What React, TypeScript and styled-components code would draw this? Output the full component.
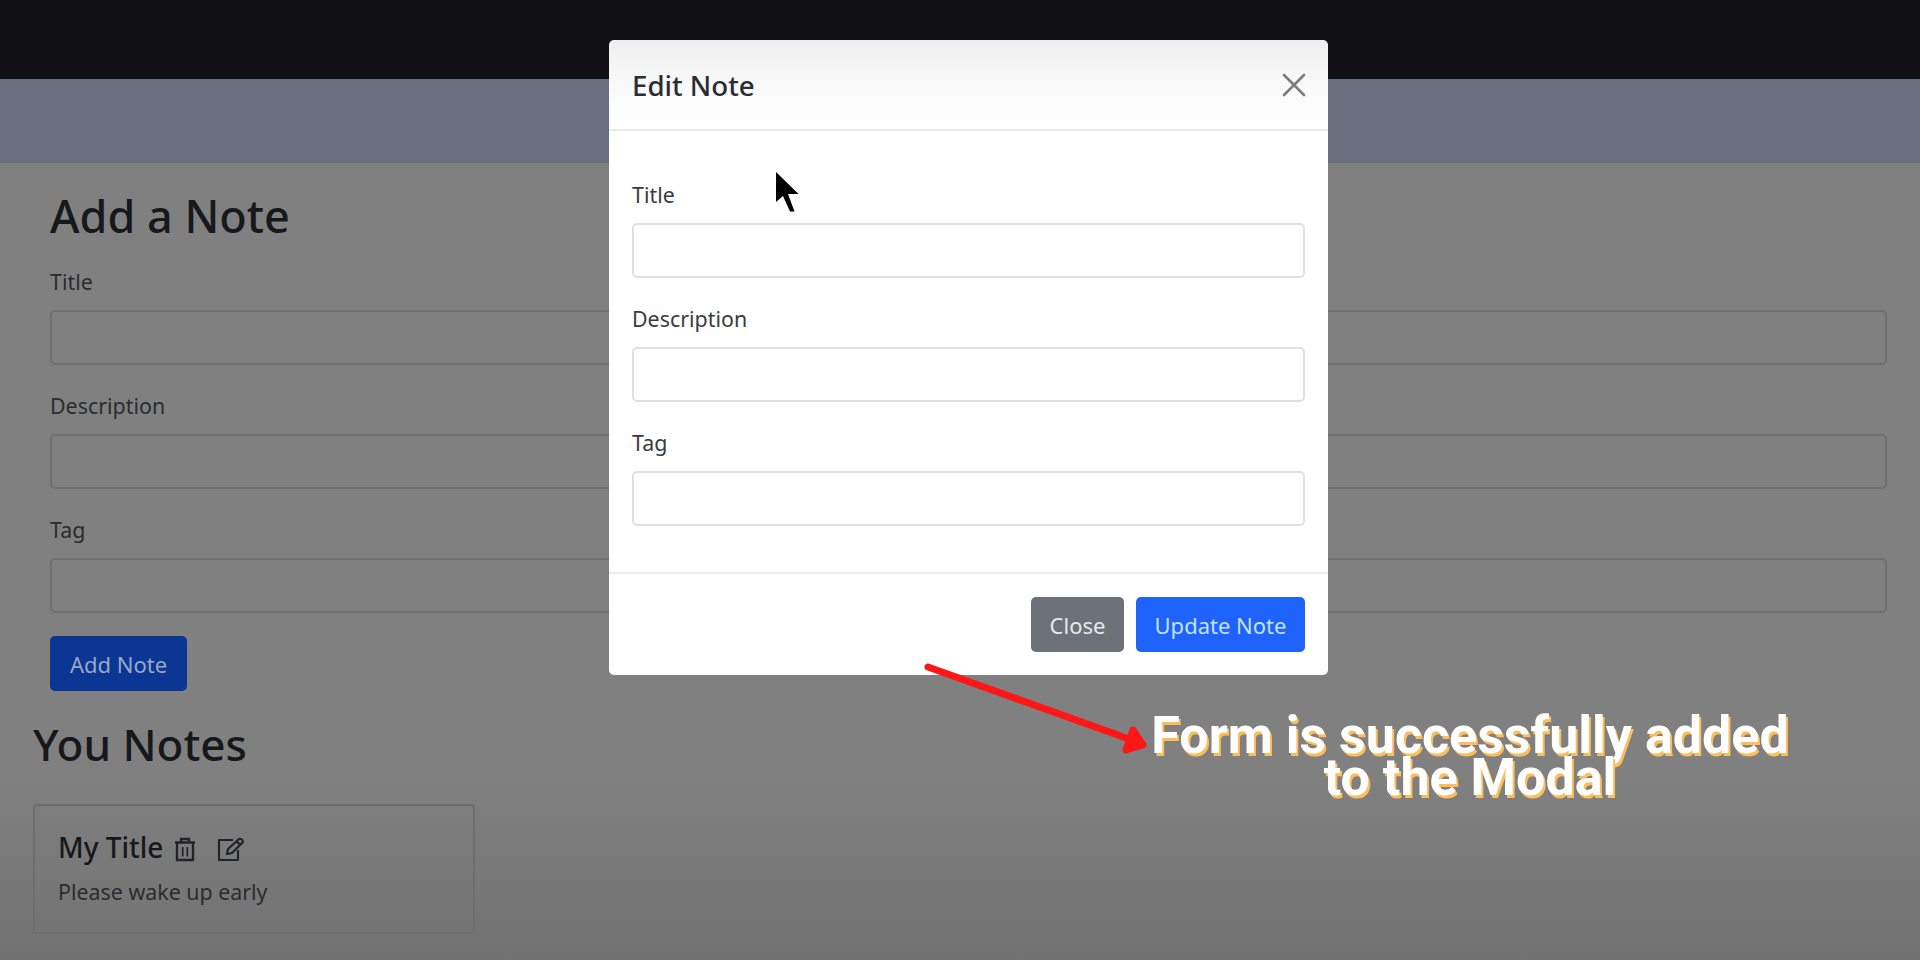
import React from "react";
import styled, { createGlobalStyle } from "styled-components";

const GlobalStyle = createGlobalStyle`
  * { box-sizing: border-box; }
  body { margin: 0; background: #fff; overflow: hidden; }
  h2, h5, p { margin: 0; }
`;

const Page = styled.div`
  position: relative;
  width: 1920px;
  height: 960px;
  overflow: hidden;
  background: linear-gradient(#808080 0, #808080 780px, #717171 960px);
  font-family: "Noto Sans", "Open Sans", sans-serif;
  font-size: 21.4px;
  color: #2b2c2e;
`;

const Navbar = styled.header`
  height: 79px;
  background: #111115;
`;

const AlertBar = styled.div`
  height: 84px;
  background: #687080;
`;

const Content = styled.main`
  padding: 27px 33px 0 33px;
`;

const NoteForm = styled.form`
  display: flex;
  flex-direction: column;
  align-items: flex-start;
  padding-left: 17px;
`;

const Heading = styled.h2<{ $size: number; $gap?: number }>`
  margin-bottom: ${(p) => p.$gap ?? 0}px;
  font-size: ${(p) => p.$size}px;
  font-weight: 500;
  line-height: 52px;
  color: #17181b;
`;

const Field = styled.div<{ $gap: number }>`
  display: flex;
  flex-direction: column;
  align-self: stretch;
  margin-bottom: ${(p) => p.$gap}px;
`;

const Label = styled.label`
  height: 32px;
  line-height: 33px;
  margin-bottom: 13px;
  white-space: nowrap;
`;

const Input = styled.input<{ $dim?: boolean }>`
  width: 100%;
  height: 55px;
  border: 2px solid ${(p) => (p.$dim ? "#707072" : "#dfe0e4")};
  border-radius: 5px;
  background: transparent;
  outline: none;
`;

const Button = styled.button<{ $bg: string; $fg: string; $width: number }>`
  width: ${(p) => p.$width}px;
  height: 55px;
  padding: 0;
  border: 0;
  border-radius: 5px;
  background: ${(p) => p.$bg};
  color: ${(p) => p.$fg};
  font: inherit;
  font-size: 22px;
  white-space: nowrap;
`;

const Notes = styled.section`
  margin-top: 27px;
`;

const NoteCard = styled.article`
  width: 442px;
  height: 130px;
  margin-top: 34px;
  padding: 25px 23px;
  border: 2px solid #6e6e6f;
  border-radius: 4px;
`;

const CardHead = styled.div`
  display: flex;
  align-items: center;
  height: 36px;
  margin-bottom: 10px;
`;

const CardTitle = styled.h5`
  width: 116px;
  padding-bottom: 5px;
  font-size: 28px;
  font-weight: 500;
  line-height: 36px;
  white-space: nowrap;
  color: #17181b;
`;

const Modal = styled.div`
  position: absolute;
  left: 609px;
  top: 40px;
  width: 719px;
  height: 635px;
  display: flex;
  flex-direction: column;
  border-radius: 5px;
  background: linear-gradient(#efeff0 0, #fcfcfd 60px, #fff 100px);
  color: #3a3c40;
`;

const ModalHeader = styled.div`
  display: flex;
  align-items: center;
  justify-content: space-between;
  height: 91px;
  padding: 0 22px 0 23px;
  border-bottom: 2px solid #e9ebee;
`;

const ModalTitle = styled.h5`
  padding-top: 1px;
  font-size: 27.7px;
  font-weight: 500;
  line-height: 36px;
  color: #2b2d31;
`;

const ModalBody = styled.div`
  flex: 1;
  padding: 47px 23px 0;
`;

const ModalFooter = styled.div`
  display: flex;
  justify-content: flex-end;
  gap: 12px;
  height: 103px;
  padding: 23px 23px 0;
  border-top: 2px solid #ededf0;
`;

const Pointer = styled.svg`
  position: absolute;
  left: 774px;
  top: 170px;
`;

const Arrow = styled.svg`
  position: absolute;
  left: 915px;
  top: 655px;
`;

const Caption = styled.div`
  position: absolute;
  left: 1140px;
  top: 715px;
  width: 660px;
  text-align: center;
  font: 700 52px/42px Roboto, sans-serif;
  color: #fff;
  text-shadow: 2px 3px 0 #ffbd59;
`;

const EditSvg = styled.svg`
  margin-left: 21px;
`;

const TrashIcon = () => (
  <svg width="22" height="25" viewBox="0 0 22 25" fill="none" stroke="#222326" strokeWidth="2.3">
    <path d="M1 5.5H21M7 5V2H15V5M3 6V23H19V6" />
    <path d="M8.7 10V19.5M13.3 10V19.5" strokeWidth="1.7" />
  </svg>
);

const EditIcon = () => (
  <EditSvg width="28" height="25" viewBox="0 0 28 25" fill="none" stroke="#222326" strokeWidth="2.1" strokeLinejoin="round">
    <path d="M16 3H2V23H21V13M10 17L11 12L22 2Q25 1 26 5L15 16ZM19.5 4.500L23.500 8" />
  </EditSvg>
);

const labels = ["Title", "Description", "Tag"];

const Fields = ({ dim, lastGap }: { dim?: boolean; lastGap: number }) => (
  <>
    {labels.map((label, i) => (
      <Field key={label} $gap={i === 2 ? lastGap : 24}>
        <Label>{label}</Label>
        <Input $dim={dim} aria-label={label} />
      </Field>
    ))}
  </>
);

export default function App() {
  return (
    <Page>
      <GlobalStyle />
      <Navbar />
      <AlertBar />
      <Content>
        <NoteForm>
          <Heading $size={45} $gap={23}>Add a Note</Heading>
          <Fields dim lastGap={23} />
          <Button type="button" $bg="#0b3694" $fg="#98a8c6" $width={137}>Add Note</Button>
        </NoteForm>
        <Notes>
          <Heading $size={44}>You Notes</Heading>
          <NoteCard>
            <CardHead>
              <CardTitle>My Title</CardTitle>
              <TrashIcon />
              <EditIcon />
            </CardHead>
            <p>Please wake up early</p>
          </NoteCard>
        </Notes>
      </Content>
      <Modal>
        <ModalHeader>
          <ModalTitle>Edit Note</ModalTitle>
          <svg width="24" height="24" viewBox="0 0 24 24" stroke="#7c7c7f" strokeWidth="2.6" strokeLinecap="round">
            <path d="M2 2L22 22M22 2L2 22" />
          </svg>
        </ModalHeader>
        <ModalBody><Fields lastGap={0} /></ModalBody>
        <ModalFooter>
          <Button $bg="#6c7278" $fg="#e5e9ed" $width={93}>Close</Button>
          <Button $bg="#1f63fd" $fg="#c4e2ff" $width={169}>Update Note</Button>
        </ModalFooter>
      </Modal>
      <Pointer width="26" height="44" viewBox="0 0 26 44">
        <path d="M2 2V32L9 26L16 41.500H20.500L14 24H24.500Z" fill="#000" />
      </Pointer>
      <Arrow width="240" height="105" viewBox="0 0 240 105" fill="#ff1616" stroke="#ff1616" strokeWidth="7">
        <path d="M13 12L214 84" strokeLinecap="round" />
        <path d="M218 75L228 90L211 95Z" strokeLinejoin="round" />
      </Arrow>
      <Caption>Form is successfully added<br />to the Modal</Caption>
    </Page>
  );
}
